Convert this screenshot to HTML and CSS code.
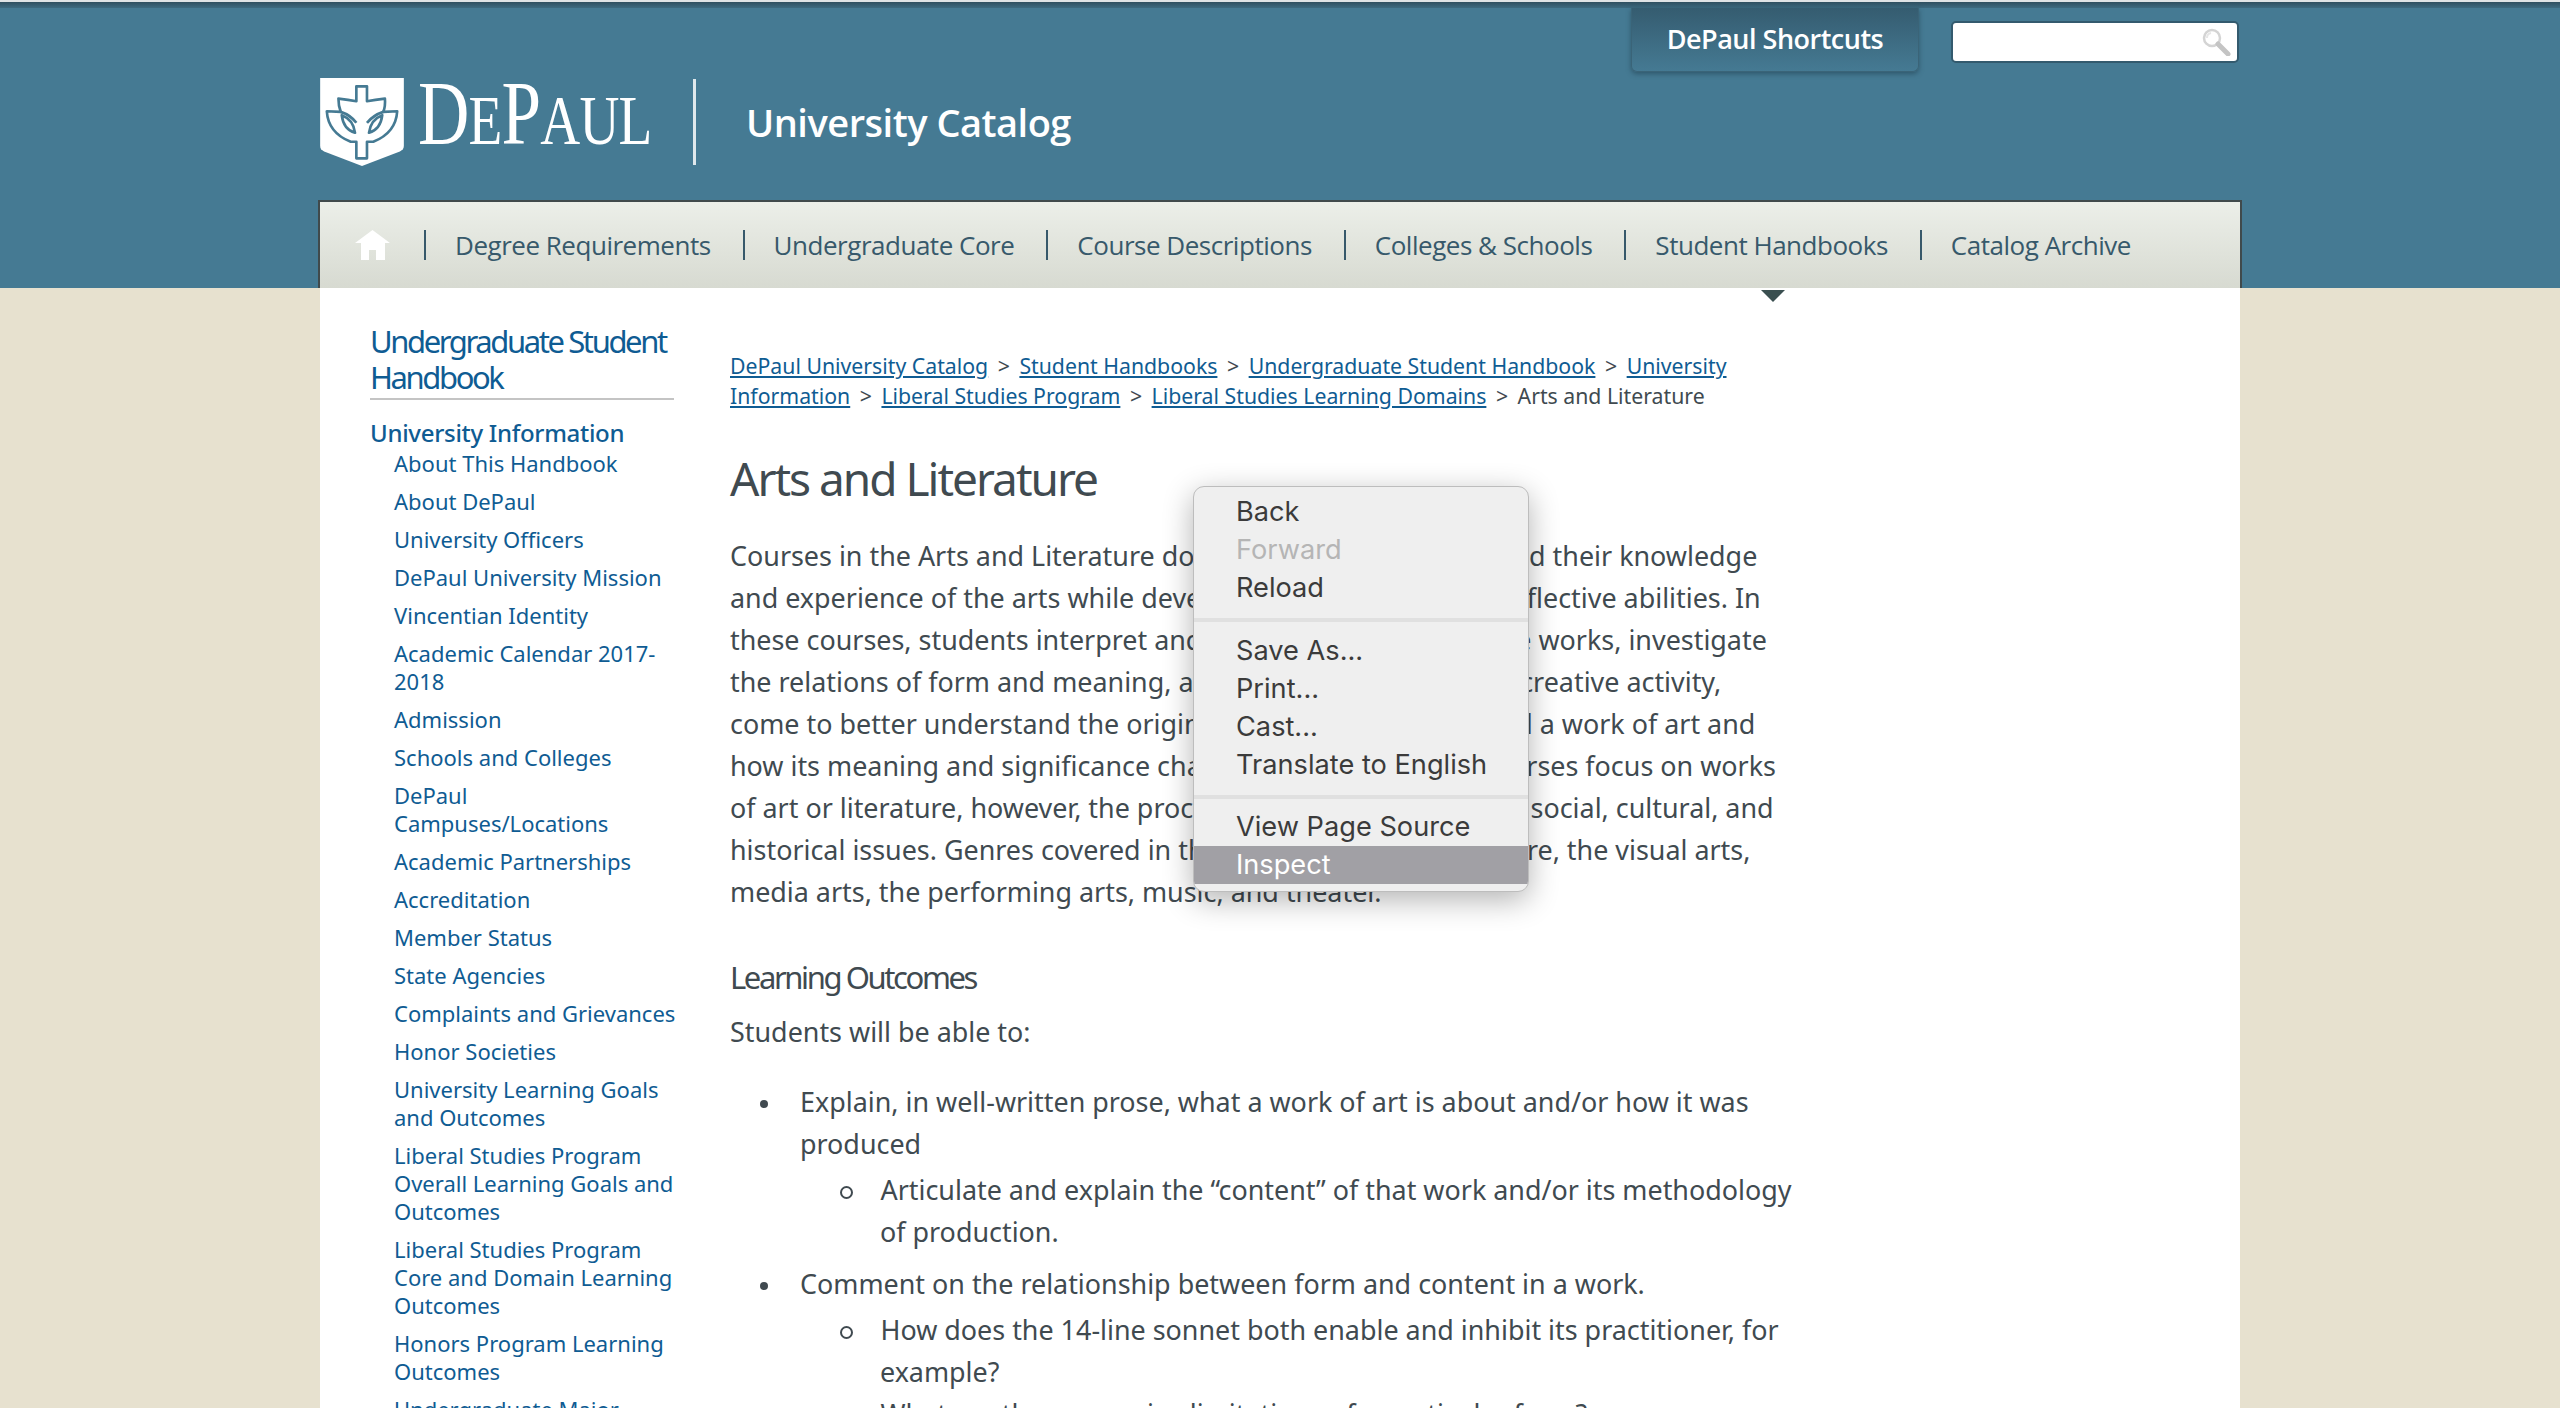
FILE: index.html
```html
<!DOCTYPE html>
<html lang="en">
<head>
<meta charset="utf-8">
<title>Arts and Literature</title>
<link rel="stylesheet" href="styles.css">
</head>
<body>
<header class="site-header">
  <div class="topline"></div>
  <div class="wrap">
    <div class="utility">
      <a class="shortcuts">DePaul Shortcuts</a>
      <div class="search">
        <svg class="search-icon" viewBox="0 0 30 28" width="30" height="28"><circle cx="11" cy="10" r="8" fill="#fff" stroke="#d4d4d4" stroke-width="2.5"/><path d="M6 10a5 5 0 0 1 4-5" fill="none" stroke="#e6e6e6" stroke-width="2"/><path d="M17 16l10 10" stroke="#c4c4c4" stroke-width="5" stroke-linecap="round"/></svg>
      </div>
    </div>
    <div class="brand">
      <svg class="shield" viewBox="0 0 252 265" width="84" height="88">
        <path d="M0 0H252V205Q252 216 240 221L126 265L12 221Q0 216 0 205Z" fill="#fff"/>
        <g fill="none" stroke="#457a93" stroke-width="8" stroke-linejoin="round">
          <path d="M109 25H141V70Q165 65 195 62Q197 85 190 102L232 100Q228 165 160 192H141V242H109V192H92Q24 165 20 100L62 102Q55 85 55 62Q85 65 109 70Z"/>
          <path d="M65 112Q100 125 105 165Q70 155 65 112Z"/>
          <path d="M187 112Q152 125 147 165Q182 155 187 112Z"/>
          <path d="M62 102Q92 112 109 135M190 102Q160 112 141 135"/>
        </g>
      </svg>
      <span class="wordmark"><span class="wordmark-text"><span class="cap">D</span>E<span class="cap">P</span>AUL</span></span>
      <span class="brand-rule"></span>
      <span class="brand-title">University Catalog</span>
    </div>
    <nav class="mainnav">
      <a class="nav-home"><svg viewBox="0 0 35 30" width="35" height="30"><path d="M17.5 0L35 13H30V30H21V20H14V30H6V13H0Z" fill="#fff"/></svg></a>
      <a class="nav-item">Degree Requirements</a>
      <a class="nav-item">Undergraduate Core</a>
      <a class="nav-item">Course Descriptions</a>
      <a class="nav-item">Colleges &amp; Schools</a>
      <a class="nav-item nav-current">Student Handbooks</a>
      <a class="nav-item">Catalog Archive</a>
    </nav>
  </div>
</header>
<div class="content">
  <aside class="sidebar">
    <h2 class="side-title">Undergraduate Student Handbook</h2>
    <h3 class="side-section">University Information</h3>
    <ul class="side-list">
      <li>About This Handbook</li>
      <li>About DePaul</li>
      <li>University Officers</li>
      <li>DePaul University Mission</li>
      <li>Vincentian Identity</li>
      <li>Academic Calendar 2017-2018</li>
      <li>Admission</li>
      <li>Schools and Colleges</li>
      <li>DePaul Campuses/Locations</li>
      <li>Academic Partnerships</li>
      <li>Accreditation</li>
      <li>Member Status</li>
      <li>State Agencies</li>
      <li>Complaints and Grievances</li>
      <li>Honor Societies</li>
      <li>University Learning Goals and Outcomes</li>
      <li>Liberal Studies Program Overall Learning Goals and Outcomes</li>
      <li>Liberal Studies Program Core and Domain Learning Outcomes</li>
      <li>Honors Program Learning Outcomes</li>
      <li>Undergraduate Major</li>
    </ul>
  </aside>
  <main class="main">
    <p class="crumbs"><a>DePaul University Catalog</a> <span class="sep">&gt;</span> <a>Student Handbooks</a> <span class="sep">&gt;</span> <a>Undergraduate Student Handbook</a> <span class="sep">&gt;</span> <a>University Information</a> <span class="sep">&gt;</span> <a>Liberal Studies Program</a> <span class="sep">&gt;</span> <a>Liberal Studies Learning Domains</a> <span class="sep">&gt;</span> Arts and Literature</p>
    <h1 class="page-title">Arts and Literature</h1>
    <p class="lead">Courses in the Arts and Literature domain push students expand their knowledge<br>and experience of the arts while developing keen critical and reflective abilities. In<br>these courses, students interpret and assess important creative works, investigate<br>the relations of form and meaning, and explore the process of creative activity,<br>come to better understand the origins of the writer's intent and a work of art and<br>how its meaning and significance changes over time. Many courses focus on works<br>of art or literature, however, the process itself also engages the social, cultural, and<br>historical issues. Genres covered in these works include literature, the visual arts,<br>media arts, the performing arts, music, and theater.</p>
    <h2 class="section-title">Learning Outcomes</h2>
    <p class="intro">Students will be able to:</p>
    <ul class="outcomes">
      <li>Explain, in well-written prose, what a work of art is about and/or how it was produced
        <ul><li>Articulate and explain the “content” of that work and/or its methodology of production.</li></ul>
      </li>
      <li>Comment on the relationship between form and content in a work.
        <ul>
          <li>How does the 14-line sonnet both enable and inhibit its practitioner, for example?</li>
          <li>What are the expressive limitations of a particular form?</li>
        </ul>
      </li>
    </ul>
  </main>
</div>
<div class="context-menu">
  <div class="menu-item">Back</div>
  <div class="menu-item is-disabled">Forward</div>
  <div class="menu-item">Reload</div>
  <div class="menu-sep"></div>
  <div class="menu-item">Save As...</div>
  <div class="menu-item">Print...</div>
  <div class="menu-item">Cast...</div>
  <div class="menu-item">Translate to English</div>
  <div class="menu-sep"></div>
  <div class="menu-item">View Page Source</div>
  <div class="menu-item is-active">Inspect</div>
</div>
</body>
</html>
```
FILE: styles.css
```css
* { box-sizing: border-box; }
html, body { margin: 0; height: 1408px; overflow: hidden; }
body { background: #e7e1cf; font-family: "Noto Sans", sans-serif; color: #404a50; position: relative; }
.site-header { height: 288px; background: #457a93; font-family: "Open Sans", sans-serif; }
.topline { height: 8px; background: linear-gradient(#dfe3e5 0, #dfe3e5 2px, #2f4f60 2px, #3d6a80 8px); }
.wrap { width: 1924px; margin: 0 auto; }
.utility { display: flex; justify-content: flex-end; padding-right: 3px; height: 64px; }
.shortcuts { width: 288px; height: 64px; display: flex; align-items: center; justify-content: center; padding-bottom: 2px; color: #fff; font-size: 27px; font-weight: 600; letter-spacing: -.5px; background: linear-gradient(#355c70, #457a93); border: 1px solid #3a6478; border-top: 0; border-radius: 0 0 6px 6px; box-shadow: 0 2px 5px rgba(30,60,75,.55); }
.search { width: 288px; height: 42px; margin: 13px 0 0 32px; background: #fff; border: 2px solid #335a6e; border-radius: 5px; display: flex; align-items: center; justify-content: flex-end; padding-right: 6px; }
.search-icon { display: block; }
.brand { display: flex; align-items: center; height: 88px; margin: 6px 0 34px; padding-left: 2px; color: #fff; }
.shield { display: block; flex: none; }
.wordmark { font-family: "Liberation Serif", serif; font-size: 70px; line-height: 88px; margin-left: 14px; width: 275px; padding-bottom: 10px; white-space: nowrap; }
.wordmark-text { display: inline-block; transform: scaleX(.79); transform-origin: left center; letter-spacing: -1px; }
.wordmark .cap { font-size: 90px; }
.brand-rule { width: 3px; height: 86px; background: #dfe8ec; }
.brand-title { margin-left: 50px; font-size: 38px; font-weight: 600; letter-spacing: -.5px; }
.mainnav { height: 88px; display: flex; align-items: center; background: linear-gradient(#ecefe9, #d7dad1); border: 2px solid #404a4c; border-bottom: 0; padding-left: 35px; }
.nav-home { display: block; width: 69px; height: 30px; }
.nav-home svg { display: block; }
.nav-item { position: relative; height: 30px; line-height: 30px; padding: 0 32px 0 29px; border-left: 2px solid #37596b; color: #37596b; font-size: 26px; letter-spacing: -.48px; white-space: nowrap; }
.nav-current::after { content: ""; position: absolute; left: 50%; bottom: -42px; margin-left: -12px; border: 12px solid transparent; border-top-color: #3a4f50; border-bottom: 0; }
.content { width: 1920px; height: 1120px; margin: 0 auto; background: #fff; display: flex; }
.sidebar { width: 304px; margin-left: 50px; flex: none; color: #0f5c93; }
.side-title { margin: 35px 0 0; padding-bottom: 3px; border-bottom: 2px solid #c4c4c4; font-size: 31px; line-height: 36px; font-weight: 400; letter-spacing: -2.4px; }
.side-section { margin: 19px 0 1.5px; font-size: 24px; line-height: 28px; font-weight: 500; letter-spacing: -.3px; }
.side-list { list-style: none; margin: 0 -8px 0 0; padding: 0 0 0 24px; font-size: 22px; line-height: 28px; }
.side-list li { margin-bottom: 10px; }
.main { width: 1080px; margin-left: 56px; font-size: 26.9px; line-height: 42px; }
.crumbs { margin: 63px 0 0; font-size: 21.25px; line-height: 30px; }
.crumbs a { color: #0f5c93; text-decoration: underline; }
.sep { margin: 0 4px; }
.page-title { margin: 37px 0 0; font-size: 46px; line-height: 60px; font-weight: 400; letter-spacing: -2px; }
.lead { margin: 27px 0 0; }
.section-title { margin: 44px 0 0; font-size: 31px; line-height: 40px; font-weight: 400; letter-spacing: -2.4px; }
.intro { margin: 14px 0 0; }
.outcomes { list-style: none; margin: 28px 0 0; padding: 0 0 0 70px; }
.outcomes ul { list-style: none; margin: 4px 0 0; padding: 0 0 0 80px; }
.outcomes > li { margin-bottom: 10px; }
.outcomes > li::before { content: ""; display: inline-block; width: 8px; height: 8px; margin: 0 32px 2px -40px; border-radius: 50%; background: #404a50; vertical-align: middle; }
.outcomes ul li::before { content: ""; display: inline-block; width: 9px; height: 9px; margin: 0 27.5px 0 -40px; border-radius: 50%; border: 2px solid #404a50; vertical-align: middle; }
.context-menu { position: absolute; left: 1193px; top: 486px; width: 336px; height: 406px; padding-top: 6px; background: #efefef; border: 1px solid #bdbdbd; border-radius: 11px; box-shadow: 0 8px 30px rgba(0,0,0,.3); font-family: Inter, sans-serif; font-size: 27.2px; color: #3b3b3b; overflow: hidden; }
.menu-item { height: 38px; line-height: 38px; padding-left: 42px; white-space: nowrap; }
.menu-sep { height: 4px; margin: 11px 0 9.5px; background: #e0e0e0; }
.is-disabled { color: #b5b5b5; }
.is-active { background: #a1a0a5; color: #fff; }
```
